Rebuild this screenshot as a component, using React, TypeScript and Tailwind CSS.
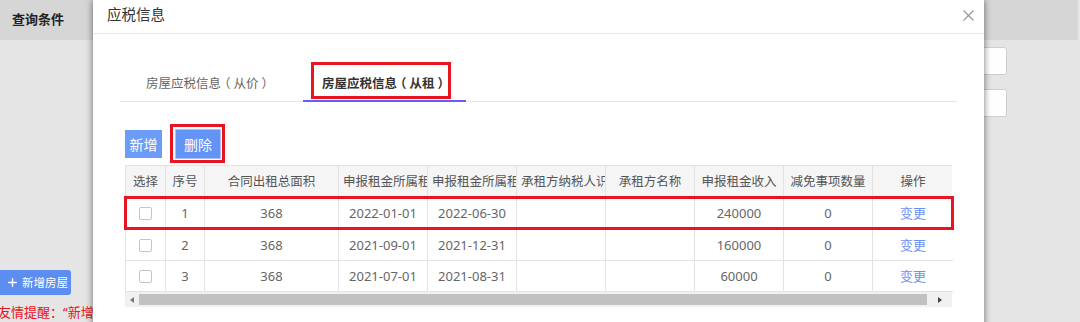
import { Plus } from "lucide-react";

const headers = [
  "选择",
  "序号",
  "合同出租总面积",
  "申报租金所属租赁期起",
  "申报租金所属租赁期止",
  "承租方纳税人识别号",
  "承租方名称",
  "申报租金收入",
  "减免事项数量",
  "操作",
];

const rows = [
  { no: "1", area: "368", start: "2022-01-01", end: "2022-06-30", income: "240000", cut: "0" },
  { no: "2", area: "368", start: "2021-09-01", end: "2021-12-31", income: "160000", cut: "0" },
  { no: "3", area: "368", start: "2021-07-01", end: "2021-08-31", income: "60000", cut: "0" },
];

const grid =
  "grid grid-cols-[40px_39px_134px_89px_89px_89px_89px_89px_89px_80px]";

function Cell({ children, last }: { children?: React.ReactNode; last?: boolean }) {
  return (
    <div
      className={`overflow-hidden whitespace-nowrap border-b border-[#e3e3e3] px-[4px] text-center ${
        last ? "" : "border-r"
      }`}
    >
      {children}
    </div>
  );
}

// full-width parens, spaced like the reference's font draws them
function TabLabel({ kind }: { kind: string }) {
  return (
    <span className="whitespace-nowrap">
      房屋应税信息<span className="-ml-[3px] mr-[3px]">（</span>
      {kind}
      <span className="ml-[3px] -mr-[3px]">）</span>
    </span>
  );
}

function RentTable() {
  return (
    <div className="relative ml-[5px] mt-[6px] w-[827px]">
      <div className="border-l border-t border-[#e3e3e3]">
        <div className={`${grid} h-[32px] bg-[#f5f5f5] text-[12.5px] leading-[31px] text-[#555]`}>
          {headers.map((h, i) => (
            <Cell key={h} last={i === headers.length - 1}>
              {h}
            </Cell>
          ))}
        </div>
        {rows.map((r, i) => (
          <div
            key={r.no}
            className={`${grid} ${i === 0 ? "h-[32px] leading-[31px]" : "h-[31px] leading-[30px]"} text-[13px] text-[#666]`}
          >
            <Cell>
              <div className="flex h-full items-center justify-center">
                <span className="h-[13px] w-[13px] rounded-[2px] border border-[#c5c5c5] bg-white" />
              </div>
            </Cell>
            <Cell>{r.no}</Cell>
            <Cell>{r.area}</Cell>
            <Cell>{r.start}</Cell>
            <Cell>{r.end}</Cell>
            <Cell />
            <Cell />
            <Cell>{r.income}</Cell>
            <Cell>{r.cut}</Cell>
            <Cell last>
              <span className="text-[#6d8ff5]">变更</span>
            </Cell>
          </div>
        ))}
      </div>
      {/* horizontal scrollbar */}
      <div className="flex h-[15px] items-center bg-[#f1f1f1]">
        <div className="flex w-[14px] justify-center">
          <span className="h-0 w-0 border-y-[3.5px] border-r-[4px] border-y-transparent border-r-[#777]" />
        </div>
        <div className="h-[11px] w-[788px] bg-[#c1c1c1]" />
        <div className="flex flex-1 justify-center">
          <span className="h-0 w-0 border-y-[3.5px] border-l-[4px] border-y-transparent border-l-[#444]" />
        </div>
      </div>
      <div className="pointer-events-none absolute left-[-1px] top-[31px] h-[34px] w-[830px] border-[3px] border-[#e8141f]" />
    </div>
  );
}

function TaxModal() {
  return (
    <div className="absolute left-[93px] top-0 h-[340px] w-[891px] bg-white shadow-[0_0_7px_rgba(0,0,0,0.55)]">
      <div className="flex h-[34px] items-center justify-between border-b border-[#e8e8e8] pb-[3px] pl-[14px] pr-[10px]">
        <span className="text-[14.5px] text-[#333]">应税信息</span>
        <svg width="11" height="11" viewBox="0 0 11 11" className="mt-[1px]">
          <path d="M0.5 0.5 L10.5 10.5 M10.5 0.5 L0.5 10.5" stroke="#999" strokeWidth="1.2" fill="none" />
        </svg>
      </div>
      <div className="px-[27px] pt-[29px]">
        <div className="flex border-b border-[#e5e5e5] text-[12.5px]">
          <div className="ml-[7px] flex h-[38px] w-[163px] items-center justify-center pt-[4px] text-[#666]">
            <TabLabel kind="从价" />
          </div>
          <div className="relative ml-[13px] flex h-[38px] w-[163px] items-center justify-center pt-[4px] font-bold text-[#333]">
            <TabLabel kind="从租" />
            <span className="absolute bottom-[-1px] left-0 h-[2px] w-full bg-[#6a5cf6]" />
            <span className="absolute left-[8px] top-[-1px] h-[37px] w-[140px] border-[3px] border-[#e8141f]" />
          </div>
        </div>
        <div className="ml-[5px] mt-[27px] flex h-[30px] items-center text-[14px] text-white">
          <button className="h-[28px] w-[37px] bg-[#6b9cf7]">新增</button>
          <div className="relative ml-[13px]">
            <button className="h-[30px] w-[46px] border border-[#a9c3fa] bg-[#6394f5]">删除</button>
            <span className="absolute left-[-5px] top-[-5px] h-[39px] w-[55px] border-[3px] border-[#e8141f]" />
          </div>
        </div>
        <RentTable />
      </div>
    </div>
  );
}

export default function App() {
  return (
    <div className="relative h-[322px] w-[1080px] overflow-hidden bg-[#e5e5e5] font-['Noto_Sans','Noto_Sans_CJK_SC',sans-serif]">
      <div className="mr-[2px] flex h-[40px] items-center bg-[#d6d6d6] pl-[12px] text-[13px] font-bold text-[#222]">
        查询条件
      </div>
      <div className="flex h-[282px]">
        <div className="flex w-[300px] flex-col pt-[230px]">
          <button className="flex h-[25px] w-[71px] items-center gap-[3px] rounded-r-[3px] bg-[#5b8ef0] pl-[6px] text-[11.5px] text-white">
            <Plus size={13} strokeWidth={2.6} />
            新增房屋
          </button>
          <p className="-ml-[2px] mt-[8px] whitespace-nowrap text-[13px] leading-[18px] text-[#e8141c]">
            友情提醒：“新增房屋”后请及时填写房屋应税信息
          </p>
        </div>
        <div className="ml-auto flex flex-col gap-[14px] pr-[73px] pt-[7px]">
          <div className="h-[28px] w-[250px] rounded-[3px] border border-[#cfcfcf] bg-white" />
          <div className="h-[28px] w-[250px] rounded-[3px] border border-[#cfcfcf] bg-white" />
        </div>
      </div>
      <TaxModal />
    </div>
  );
}
